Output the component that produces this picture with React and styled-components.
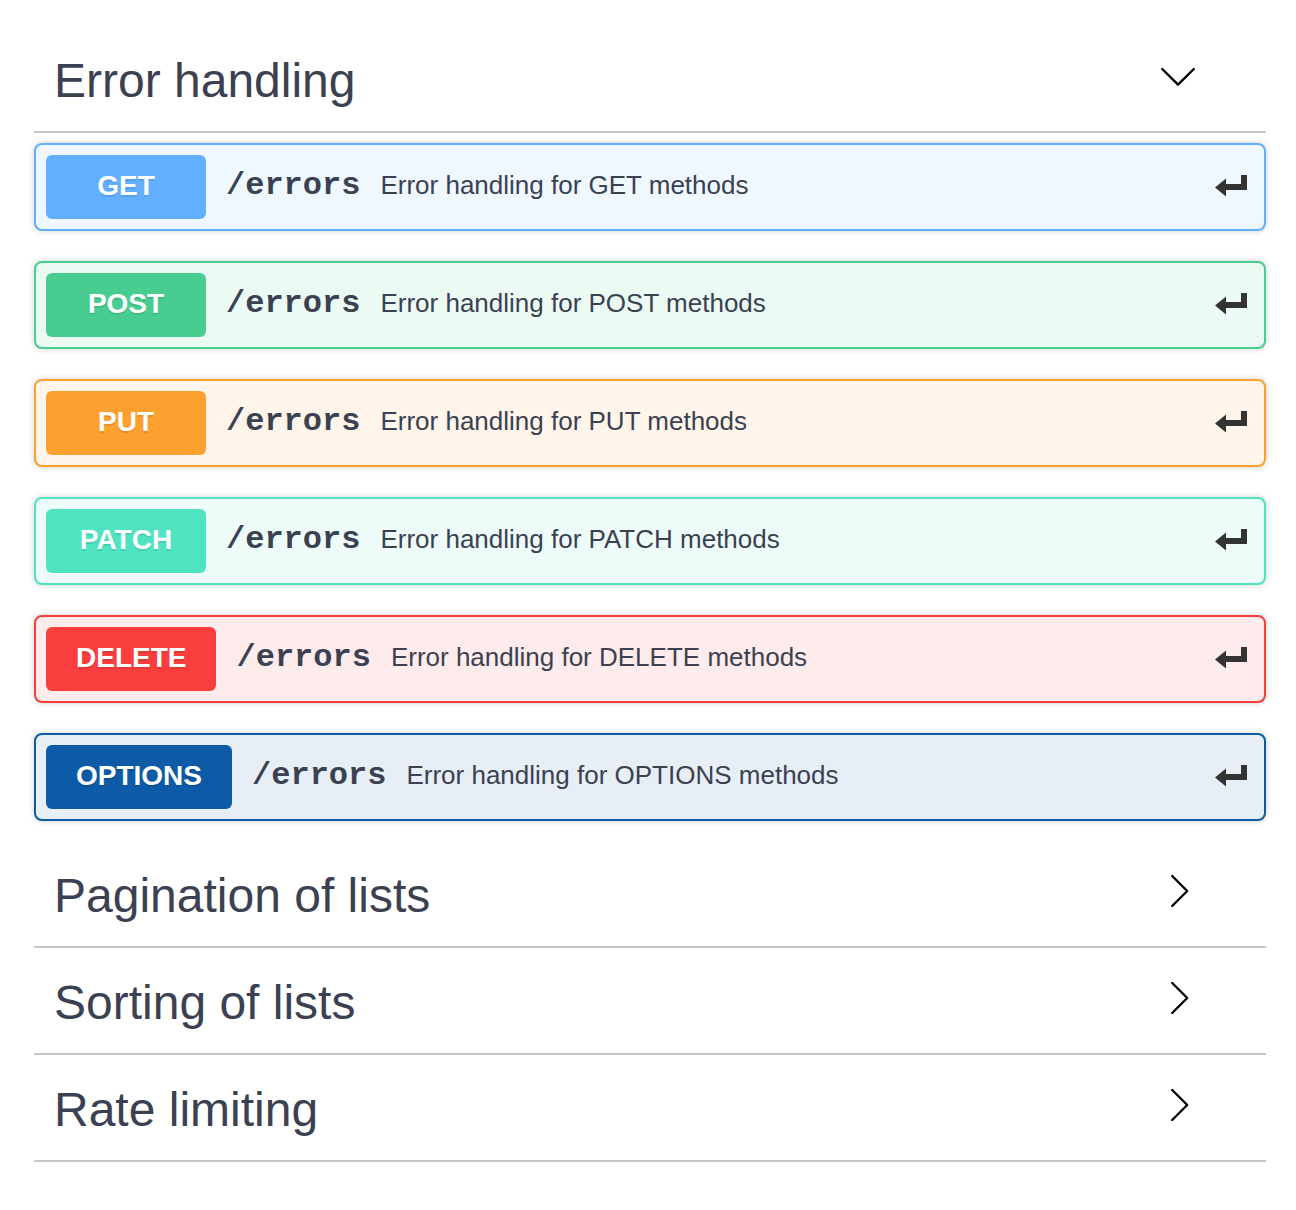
import React from "react";
import styled, { createGlobalStyle } from "styled-components";

const Global = createGlobalStyle`
  html, body { margin: 0; padding: 0; background: #fff; }
  body { font-family: "Liberation Sans", Helvetica, Arial, sans-serif; color: #3b4151; }
`;

const Page = styled.div`
  width: 1232px;
  padding: 36px 30px 48px 34px;
`;

const Tag = styled.section`
  display: flex;
  flex-direction: column;
`;

const TagHeader = styled.div`
  display: flex;
  align-items: flex-start;
  justify-content: space-between;
  padding: 17px 40px 23px 20px;
  margin-bottom: 10px;
  border-bottom: 2px solid rgba(59, 65, 81, 0.3);
  cursor: pointer;
`;

const TagTitle = styled.h3`
  margin: 0;
  font-size: 48px;
  line-height: 55px;
  font-weight: 400;
  color: #3b4151;
`;

const ArrowBox = styled.svg`
  width: 40px;
  height: 40px;
  margin-top: ${(p) => p.$top}px;
  margin-right: 28px;
  flex: none;
`;

const Ops = styled.div`
  display: flex;
  flex-direction: column;
  gap: 30px;
  margin-bottom: 30px;
`;

const Block = styled.div`
  border: 2px solid ${(p) => p.$c};
  background: ${(p) => p.$bg};
  border-radius: 8px;
  box-shadow: 0 0 6px rgba(0, 0, 0, 0.19);
  padding: 10px;
`;

const Summary = styled.div`
  display: flex;
  align-items: center;
  height: 64px;
`;

const Method = styled.span`
  box-sizing: border-box;
  min-width: 160px;
  height: 64px;
  padding: 0 30px 3px;
  line-height: 61px;
  text-align: center;
  border-radius: 6px;
  background: ${(p) => p.$c};
  color: #fff;
  font-size: 28px;
  font-weight: 700;
  text-shadow: 0 2px 0 rgba(0, 0, 0, 0.1);
  flex: none;
`;

const Path = styled.span`
  padding: 0 20px 2px;
  font-family: "Liberation Mono", Courier, monospace;
  font-size: 32px;
  font-weight: 700;
  color: #3b4151;
  line-height: 36px;
`;

const Desc = styled.span`
  flex: 1;
  font-size: 26px;
  line-height: 30px;
  padding-bottom: 5px;
  color: #3b4151;
`;

const ReturnIcon = styled.svg`
  width: 32px;
  height: 22px;
  margin-right: 7px;
  margin-bottom: 3px;
  flex: none;
`;

const ops = [
  { m: "GET", c: "#61affe", bg: "#eff7ff" },
  { m: "POST", c: "#49cc90", bg: "#ecfaf4" },
  { m: "PUT", c: "#fca130", bg: "#fff5ea" },
  { m: "PATCH", c: "#50e3c2", bg: "#edfcf9" },
  { m: "DELETE", c: "#f93e3e", bg: "#feebeb" },
  { m: "OPTIONS", c: "#0d5aa7", bg: "#e7eef6" },
];

const Down = () => (
  <ArrowBox $top={4} viewBox="0 0 40 40" fill="none">
    <polyline points="4.2,12 20,27.6 35.8,12" stroke="#000" strokeWidth="2.4" strokeLinecap="round" strokeLinejoin="round" />
  </ArrowBox>
);

const Right = () => (
  <ArrowBox $top={3} viewBox="0 0 40 40" fill="none">
    <polyline points="14.2,5 29.2,20 14.2,35" stroke="#000" strokeWidth="2.4" strokeLinecap="round" strokeLinejoin="round" />
  </ArrowBox>
);

const Return = () => (
  <ReturnIcon viewBox="0 0 32 22">
    <path d="M26 0H32V15H9V9H26Z" fill="#333" />
    <polygon points="0,12.5 11,3.5 11,21.5" fill="#333" />
  </ReturnIcon>
);

export default function App() {
  return (
    <Page>
      <Global />
      <Tag>
        <TagHeader>
          <TagTitle>Error handling</TagTitle>
          <Down />
        </TagHeader>
        <Ops>
          {ops.map((o) => (
            <Block key={o.m} $c={o.c} $bg={o.bg}>
              <Summary>
                <Method $c={o.c}>{o.m}</Method>
                <Path>/errors</Path>
                <Desc>Error handling for {o.m} methods</Desc>
                <Return />
              </Summary>
            </Block>
          ))}
        </Ops>
      </Tag>
      {["Pagination of lists", "Sorting of lists", "Rate limiting"].map((t) => (
        <Tag key={t}>
          <TagHeader>
            <TagTitle>{t}</TagTitle>
            <Right />
          </TagHeader>
        </Tag>
      ))}
    </Page>
  );
}
